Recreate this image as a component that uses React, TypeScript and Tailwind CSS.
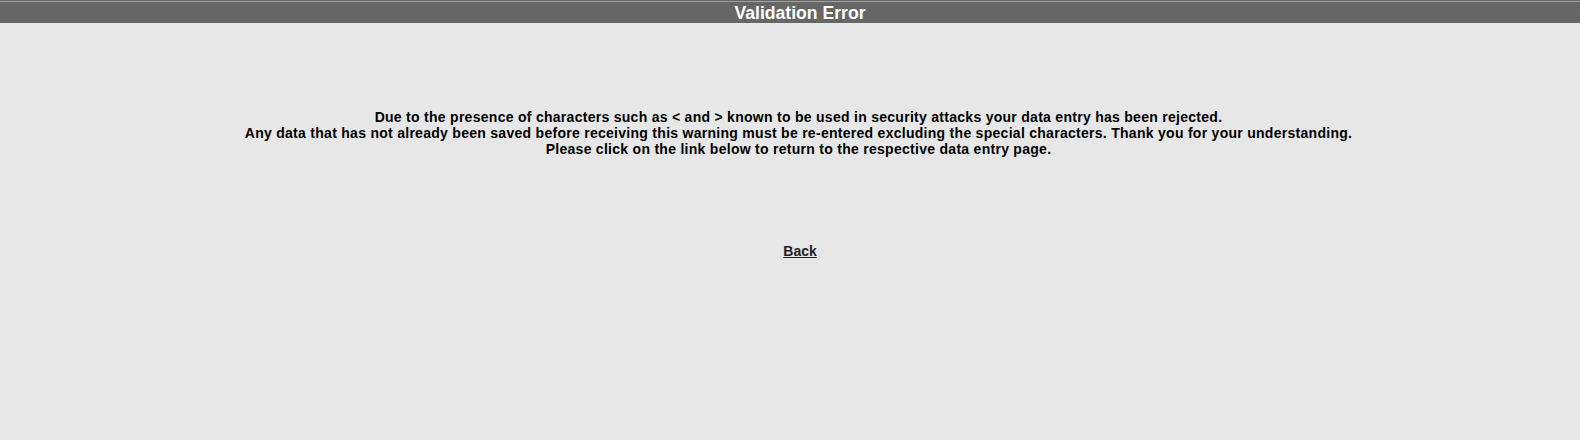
export default function App() {
  return (
    <div className="min-h-[440px] w-full bg-[#e7e7e7] font-['Liberation_Sans',Arial,sans-serif]">
      {/* Title bar */}
      <div className="border-t border-[#666666] bg-[#666666]">
        <div className="border-t border-[#a3a3a3] h-[22px] flex items-center justify-center pl-[20px]">
          <h1 className="text-[17.6px] leading-[22px] font-bold text-white">Validation Error</h1>
        </div>
      </div>

      {/* Message */}
      <div className="pt-[86px] pl-[17px] text-center text-[14px] leading-[16px] font-bold tracking-[0.28px] text-black">
        <p>Due to the presence of characters such as &lt; and &gt; known to be used in security attacks your data entry has been rejected.</p>
        <p>Any data that has not already been saved before receiving this warning must be re-entered excluding the special characters. Thank you for your understanding.</p>
        <p>Please click on the link below to return to the respective data entry page.</p>
      </div>

      <div className="pt-[86px] pl-[20px] text-center text-[14px] leading-[16px] font-bold">
        <a href="#" className="text-[#222222] underline">Back</a>
      </div>
    </div>
  );
}
